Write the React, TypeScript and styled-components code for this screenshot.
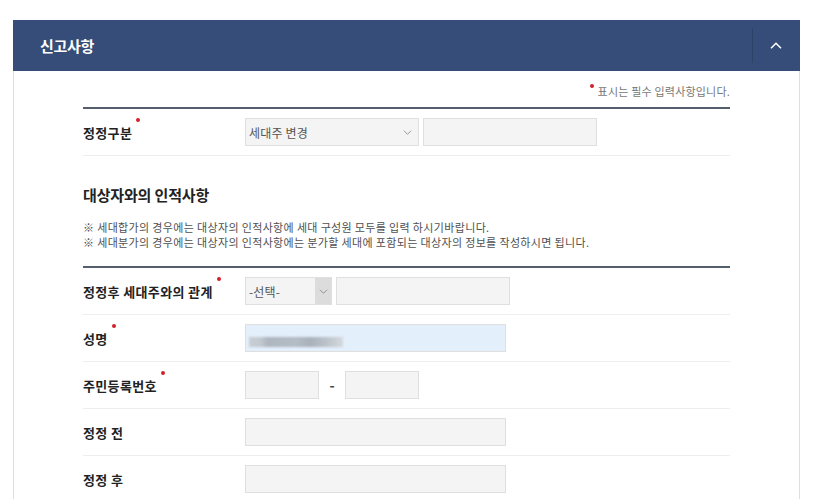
import React from 'react';
import styled, { createGlobalStyle } from 'styled-components';

const GlobalStyle = createGlobalStyle`
  html, body {
    margin: 0;
    padding: 0;
    background: #fff;
  }
  body {
    font-family: "Noto Sans CJK KR", "Noto Sans", sans-serif;
    color: #222;
  }
`;

const Page = styled.div`
  padding: 20px 0 0 13px;
  width: 787px;
`;

const Panel = styled.section`
  border-left: 1px solid #dedede;
  border-right: 1px solid #dedede;
`;

const PanelHeader = styled.header`
  display: flex;
  align-items: center;
  height: 51px;
  margin: 0 -1px;
  background: #354d78;
`;

const PanelTitle = styled.h2`
  flex: 1;
  margin: 0;
  padding-left: 27px;
  font-size: 15px;
  font-weight: 700;
  letter-spacing: -0.3px;
  color: #fff;
`;

const ToggleButton = styled.button`
  display: flex;
  align-items: center;
  justify-content: center;
  width: 48px;
  height: 35px;
  padding: 0 2px 0 0;
  background: transparent;
  border: none;
  border-left: 1px solid rgba(0, 0, 0, 0.14);
  cursor: pointer;
`;

const PanelBody = styled.div`
  padding: 12px 69px 0;
`;

const RequiredNote = styled.p`
  margin: 0 0 8px;
  text-align: right;
  font-size: 11px;
  line-height: 16px;
  letter-spacing: 0.2px;
  color: #777;

  &::before {
    content: '';
    display: inline-block;
    width: 4px;
    height: 4px;
    margin-right: 4px;
    border-radius: 50%;
    background: #d3202b;
    position: relative;
    top: -8px;
  }
`;

const FormTable = styled.div`
  border-top: 2px solid #545e6c;
`;

const Row = styled.div`
  display: flex;
  align-items: center;
  height: 46px;
  border-bottom: 1px solid #eeeeee;
`;

const Label = styled.div<{ $required?: boolean }>`
  width: 162px;
  flex-shrink: 0;
  font-size: 13px;
  font-weight: 700;
  letter-spacing: 0.35px;
  color: #222;

  &::after {
    content: '';
    display: ${({ $required }) => ($required ? 'inline-block' : 'none')};
    width: 4px;
    height: 4px;
    margin-left: 4px;
    border-radius: 50%;
    background: #d3202b;
    position: relative;
    top: -16px;
  }
`;

const Fields = styled.div`
  display: flex;
  align-items: center;
  gap: 4px;
`;

const TextBox = styled.div<{ $w: number; $filled?: boolean }>`
  box-sizing: border-box;
  width: ${({ $w }) => $w}px;
  height: 28px;
  background: ${({ $filled }) => ($filled ? '#e3effb' : '#f4f4f4')};
  border: 1px solid #dfdfdf;
  position: relative;
  overflow: hidden;
`;

const Blurred = styled.div`
  position: absolute;
  left: 3px;
  top: 12px;
  width: 94px;
  height: 10px;
  filter: blur(1.2px);
  background: linear-gradient(
    90deg,
    #c9ced4 0%,
    #c3c9d0 12%,
    #aeb6c0 20%,
    #b4bcc6 50%,
    #a9b1bb 65%,
    #c0c6cd 85%,
    #d6dadf 100%
  );
`;

const Select = styled.div<{ $w: number; $shaded?: boolean }>`
  box-sizing: border-box;
  width: ${({ $w }) => $w}px;
  height: 28px;
  display: flex;
  align-items: center;
  background: #f4f4f4;
  border: 1px solid #dfdfdf;
  font-size: 12px;
  letter-spacing: 0.2px;
  color: #555;

  span {
    flex: 1;
    padding-left: 3px;
  }

  i {
    display: flex;
    align-items: center;
    justify-content: center;
    width: 16px;
    height: 100%;
    margin-right: ${({ $shaded }) => ($shaded ? '0' : '3px')};
    background: ${({ $shaded }) => ($shaded ? '#dcdcdc' : 'transparent')};
  }
`;

const Dash = styled.span`
  width: 18px;
  text-align: center;
  font-size: 14px;
  font-weight: 700;
  color: #444;
`;

const SectionTitle = styled.h3`
  margin: 29px 0 0;
  font-size: 15px;
  line-height: 20px;
  font-weight: 700;
  letter-spacing: -0.15px;
  color: #222;
`;

const Notes = styled.div`
  margin: 15px 0 16px;
  font-size: 11px;
  line-height: 15px;
  letter-spacing: 0.35px;
  color: #505050;

  p {
    margin: 0;
  }
`;

const Chevron = ({ up }: { up?: boolean }) => (
  <svg width={up ? 12 : 9} height={up ? 7 : 5} viewBox="0 0 12 7" fill="none">
    <path
      d={up ? 'M1 6.2 L6 1.2 L11 6.2' : 'M1 1 L6 6 L11 1'}
      stroke={up ? '#ffffff' : '#888'}
      strokeWidth={up ? 1.5 : 1.2}
    />
  </svg>
);

export default function App() {
  return (
    <>
      <GlobalStyle />
      <Page>
        <Panel>
          <PanelHeader>
            <PanelTitle>신고사항</PanelTitle>
            <ToggleButton aria-label="접기">
              <Chevron up />
            </ToggleButton>
          </PanelHeader>

          <PanelBody>
            <RequiredNote>표시는 필수 입력사항입니다.</RequiredNote>

            <FormTable>
              <Row>
                <Label $required>정정구분</Label>
                <Fields>
                  <Select $w={174}>
                    <span>세대주 변경</span>
                    <i>
                      <Chevron />
                    </i>
                  </Select>
                  <TextBox $w={174} />
                </Fields>
              </Row>
            </FormTable>

            <SectionTitle>대상자와의 인적사항</SectionTitle>
            <Notes>
              <p>※ 세대합가의 경우에는 대상자의 인적사항에 세대 구성원 모두를 입력 하시기바랍니다.</p>
              <p>※ 세대분가의 경우에는 대상자의 인적사항에는 분가할 세대에 포함되는 대상자의 정보를 작성하시면 됩니다.</p>
            </Notes>

            <FormTable>
              <Row>
                <Label $required>정정후 세대주와의 관계</Label>
                <Fields>
                  <Select $w={87} $shaded>
                    <span>-선택-</span>
                    <i>
                      <Chevron />
                    </i>
                  </Select>
                  <TextBox $w={174} />
                </Fields>
              </Row>
              <Row>
                <Label $required>성명</Label>
                <TextBox $w={261} $filled>
                  <Blurred />
                </TextBox>
              </Row>
              <Row>
                <Label $required>주민등록번호</Label>
                <Fields>
                  <TextBox $w={74} />
                  <Dash>-</Dash>
                  <TextBox $w={74} />
                </Fields>
              </Row>
              <Row>
                <Label>정정 전</Label>
                <TextBox $w={261} />
              </Row>
              <Row>
                <Label>정정 후</Label>
                <TextBox $w={261} />
              </Row>
            </FormTable>
          </PanelBody>
        </Panel>
      </Page>
    </>
  );
}
